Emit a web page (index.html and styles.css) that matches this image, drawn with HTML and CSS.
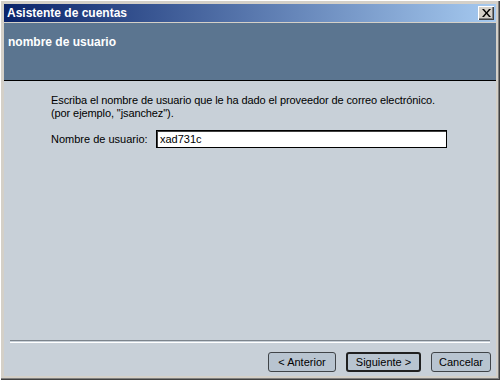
FILE: index.html
```html
<!DOCTYPE html>
<html lang="es">
<head>
<meta charset="utf-8">
<title>Asistente de cuentas</title>
<link rel="stylesheet" href="styles.css">
</head>
<body>
<div class="window">
  <div class="titlebar">
    <span class="title">Asistente de cuentas</span>
    <button class="close" aria-label="Cerrar">
      <svg width="9" height="8" viewBox="0 0 9 8"><path d="M0 0h2l2.5 3L7 0h2L5.5 4 9 8H7L4.5 5 2 8H0l3.5-4z" fill="#000"/></svg>
    </button>
  </div>
  <div class="gap"></div>
  <div class="header">nombre de usuario</div>
  <div class="content">
    <div class="body">
      <p class="desc">Escriba el nombre de usuario que le ha dado el proveedor de correo electrónico.<br>(por ejemplo, "jsanchez").</p>
      <div class="field">
        <label for="user">Nombre de usuario:</label>
        <input id="user" type="text" value="xad731c">
      </div>
    </div>
    <div class="sep"></div>
    <div class="buttons">
      <button class="btn w-prev">&lt; Anterior</button>
      <button class="btn w-next default">Siguiente &gt;</button>
      <button class="btn w-cancel">Cancelar</button>
    </div>
  </div>
</div>
</body>
</html>
```

FILE: styles.css
```css
html, body {
  margin: 0;
  padding: 0;
  background: #d4d0c8;
}
.window {
  width: 500px;
  height: 380px;
  box-sizing: border-box;
  padding: 4px 4px 4px 4px;
  background: #d4d0c8;
  box-shadow: inset 1px 1px 0 #ffffff, inset -1px -1px 0 #404040, inset -2px -2px 0 #808080;
  display: flex;
  flex-direction: column;
  font-family: "Liberation Sans", Arial, sans-serif;
  font-size: 11px;
  color: #000;
}
.titlebar {
  height: 18px;
  flex: none;
  background: linear-gradient(to right, #0a246a, #a6caf0);
  display: flex;
  align-items: center;
  justify-content: space-between;
  padding: 0 2px 0 2px;
}
.title {
  color: #fff;
  font-weight: bold;
  font-size: 12px;
  padding-left: 1px;
}
.close {
  width: 16px;
  height: 14px;
  padding: 0;
  margin: 0;
  border: none;
  background: #d4d0c8;
  box-shadow: inset 1px 1px 0 #fff, inset -1px -1px 0 #404040, inset -2px -2px 0 #808080;
  display: flex;
  align-items: center;
  justify-content: center;
}
.gap {
  height: 1px;
  flex: none;
  background: #d4d0c8;
}
.header {
  height: 58px;
  flex: none;
  box-sizing: border-box;
  background: #5b7590;
  border-bottom: 1px solid #000;
  color: #fff;
  font-weight: bold;
  font-size: 12px;
  padding: 12px 0 0 4px;
}
.content {
  flex: 1;
  background: #c8d0d8;
  display: flex;
  flex-direction: column;
}
.body {
  flex: 1;
  padding: 13px 0 0 47px;
}
.desc {
  margin: 0;
  line-height: 13px;
  letter-spacing: -0.1px;
}
.field {
  display: flex;
  align-items: center;
  margin-top: 10px;
}
.field label {
  width: 105px;
}
.field input {
  width: 291px;
  height: 18px;
  box-sizing: border-box;
  border: 1px solid #000;
  box-shadow: inset 1px 1px 0 #404040;
  background: #fff;
  font-family: "Liberation Sans", Arial, sans-serif;
  font-size: 11px;
  padding: 0 3px;
  margin: 0;
  outline: none;
}
.sep {
  margin: 0 6px 0 6px;
  height: 1px;
  border-top: 1px solid #7c848c;
  border-bottom: 1px solid #fff;
}
.buttons {
  display: flex;
  justify-content: flex-end;
  gap: 10px;
  padding: 9px 5px 4px 0;
}
.btn {
  height: 20px;
  box-sizing: border-box;
  border: 1px solid #404448;
  border-radius: 3px;
  background: #b8c4d0;
  font-family: "Liberation Sans", Arial, sans-serif;
  font-size: 11px;
  color: #000;
  padding: 0;
  margin: 0;
}
.btn.default {
  border: 2px solid #202020;
}
.w-prev { width: 68px; }
.w-next { width: 75px; }
.w-cancel { width: 60px; }
```
